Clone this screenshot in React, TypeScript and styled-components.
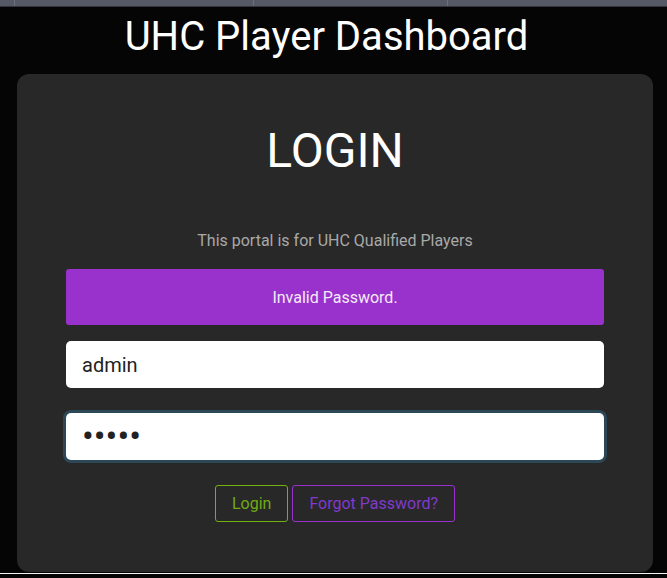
import React from "react";
import styled, { createGlobalStyle } from "styled-components";

const GlobalStyle = createGlobalStyle`
  html, body {
    margin: 0;
    padding: 0;
    background: #050505;
    font-family: Roboto, "Liberation Sans", sans-serif;
    color: #fff;
  }
  * { box-sizing: border-box; }
`;

const TabStrip = styled.div`
  display: flex;
  height: 7px;
  background: #555865;
  border-bottom: 1px solid #33353c;
`;

const TabSlot = styled.div<{ $w: number }>`
  width: ${(p) => p.$w}px;
  border-right: 1px solid #6c6f7c;
`;

const Title = styled.h1`
  margin: 6px 0 13px;
  font-size: 40px;
  font-weight: 400;
  line-height: 48px;
  text-align: center;
  padding-right: 14px;
`;

const Card = styled.div`
  margin-left: 17px;
  width: 636px;
  background: #282828;
  border-radius: 12px;
  padding: 48px 49px 50px;
  display: flex;
  flex-direction: column;
  align-items: stretch;
`;

const Heading = styled.h2`
  margin: 0;
  font-size: 48px;
  font-weight: 400;
  line-height: 58px;
  text-align: center;
`;

const Subtitle = styled.p`
  margin: 49px 0 0;
  font-size: 16px;
  line-height: 24px;
  color: #a8a8a8;
  text-align: center;
`;

const Alert = styled.div`
  margin-top: 16px;
  height: 56px;
  background: #9932cc;
  border-radius: 3px;
  display: flex;
  align-items: center;
  justify-content: center;
  font-size: 16px;
  color: #f4eaf8;
`;

const Input = styled.input<{ $focused?: boolean }>`
  margin-top: ${(p) => (p.$focused ? 25 : 16)}px;
  height: 47px;
  width: 100%;
  border: 0;
  border-radius: 5px;
  background: #fff;
  padding: 0 16px;
  font-family: Roboto, "Liberation Sans", sans-serif;
  font-size: ${(p) => (p.$focused ? 35 : 20)}px;
  color: #222;
  outline: none;
  box-shadow: ${(p) => (p.$focused ? "0 0 0 3px #2c4756" : "none")};
`;

const Actions = styled.div`
  margin-top: 25px;
  display: flex;
  justify-content: center;
  gap: 4px;
`;

const Btn = styled.button<{ $tone: "green" | "purple" }>`
  background: transparent;
  border: 1px solid ${(p) => (p.$tone === "green" ? "#73b10f" : "#9b30d0")};
  color: ${(p) => (p.$tone === "green" ? "#6fac12" : "#8139cd")};
  border-radius: 3px;
  padding: 6px 16px;
  font-family: Roboto, "Liberation Sans", sans-serif;
  font-size: 16px;
  line-height: 23px;
  cursor: pointer;
`;

const Rule = styled.div`
  margin-top: 1px;
  height: 1px;
  background: #f2f2f2;
`;

export default function App() {
  return (
    <>
      <GlobalStyle />
      <TabStrip>
        <TabSlot $w={15} />
        <TabSlot $w={239} />
        <TabSlot $w={194} />
      </TabStrip>
      <Title>UHC Player Dashboard</Title>
      <Card>
        <Heading>LOGIN</Heading>
        <Subtitle>This portal is for UHC Qualified Players</Subtitle>
        <Alert>Invalid Password.</Alert>
        <Input type="text" defaultValue="admin" readOnly />
        <Input type="password" defaultValue="admin" readOnly $focused />
        <Actions>
          <Btn $tone="green">Login</Btn>
          <Btn $tone="purple">Forgot Password?</Btn>
        </Actions>
      </Card>
      <Rule />
    </>
  );
}
